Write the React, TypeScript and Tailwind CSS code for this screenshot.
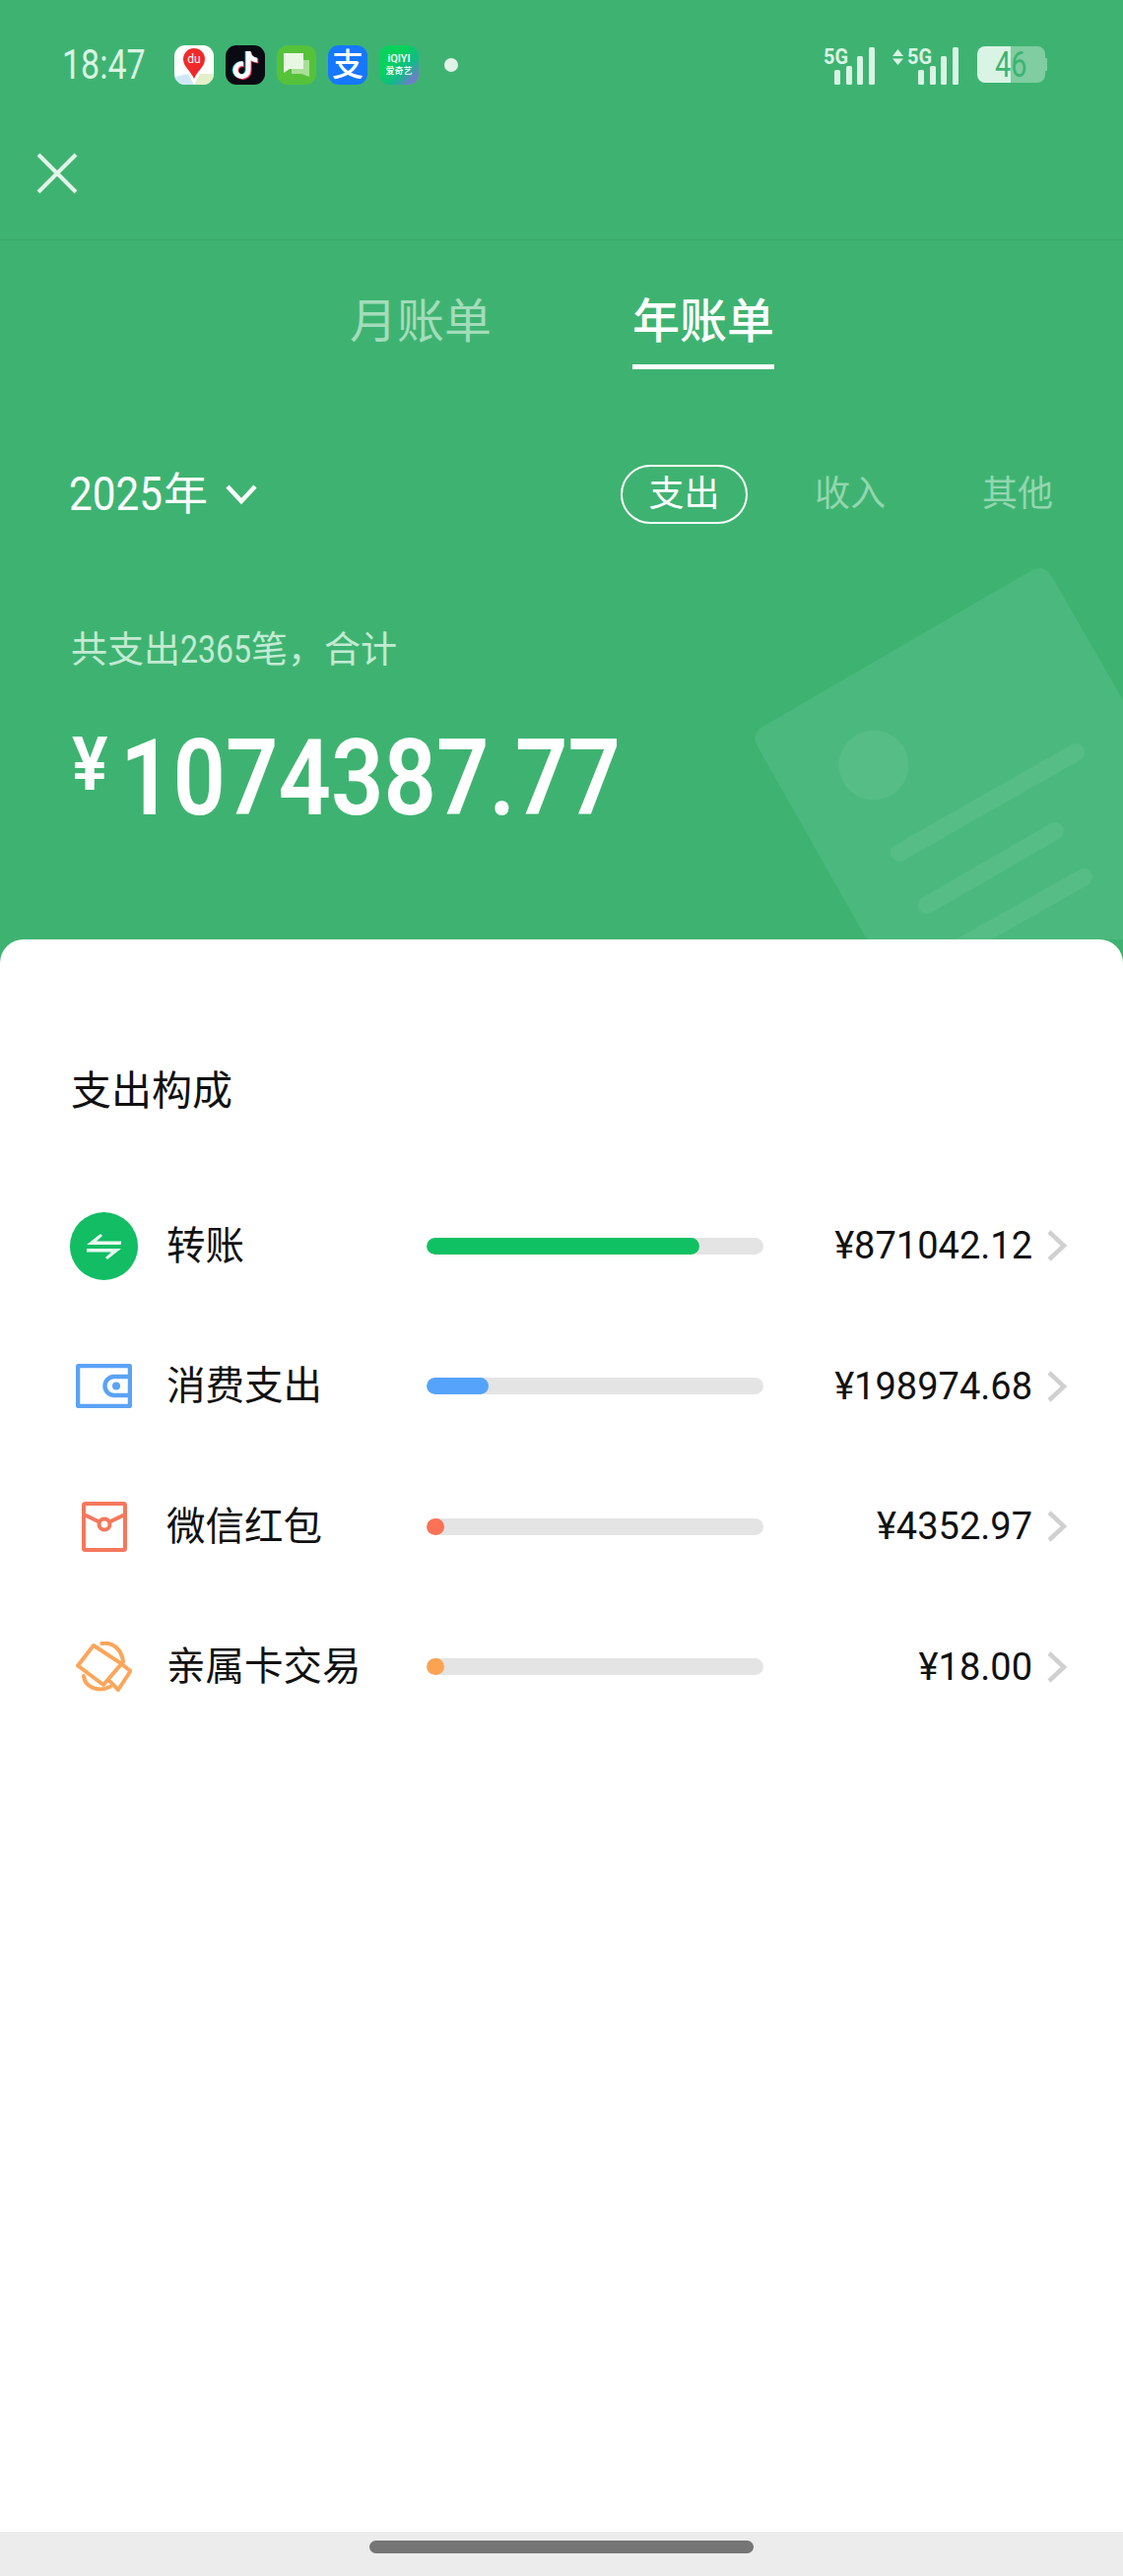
import { ReactNode } from 'react';
import { FaTiktok } from 'react-icons/fa';

const rows = [
    { name: '转账', amount: '¥871042.12', fill: 'w-[277px] bg-[#0fc163]', icon: <TransferIcon /> },
    { name: '消费支出', amount: '¥198974.68', fill: 'w-[63px] bg-[#55a3fb]', icon: <WalletIcon /> },
    { name: '微信红包', amount: '¥4352.97', fill: 'w-[18px] bg-[#fb7256]', icon: <PacketIcon /> },
    { name: '亲属卡交易', amount: '¥18.00', fill: 'w-[18px] bg-[#fca352]', icon: <FamilyCardIcon /> },
];

function TransferIcon() {
    return (
        <svg width="69" height="69" viewBox="0 0 69 69">
            <circle cx="34.5" cy="34.5" r="34.5" fill="#12bd64" />
            <path d="M17 33 L31 22 L33 24 L27 29.5 H52 V33 Z" fill="#eafaf1" />
            <path d="M52 37 L38 48 L36 46 L42 40.5 H17 V37 Z" fill="#eafaf1" />
        </svg>
    );
}

function WalletIcon() {
    return (
        <svg width="57" height="45" viewBox="0 0 57 45" fill="none" stroke="#5ba3f5" strokeWidth="4.5">
            <rect x="2" y="2" width="53" height="41" rx="1.5" />
            <path d="M55 13 H39 a9.5 9.5 0 0 0 0 19 H55" />
            <circle cx="41" cy="22.5" r="4" fill="#5ba3f5" stroke="none" />
        </svg>
    );
}

function PacketIcon() {
    return (
        <svg width="46" height="51" viewBox="0 0 46 51" fill="none" stroke="#f4785c" strokeWidth="4">
            <rect x="2" y="2" width="42" height="47" rx="1.5" />
            <path d="M2 13 L23 23 L44 13" />
            <circle cx="23" cy="23" r="5.5" fill="#fff" />
        </svg>
    );
}

function FamilyCardIcon() {
    return (
        <svg width="57" height="51" viewBox="0 0 57 51" fill="none" stroke="#fba65a" strokeWidth="4" strokeLinejoin="round" strokeLinecap="round">
            <path d="M2 24.5 L18 4 L46.3 22.7 L28 44 Z" />
            <path d="M46.3 22.7 L55.5 30 L43 49 L34.7 40.6" />
            <path d="M26.3 2 C37 0 47 8 48 21" />
            <path d="M8 35 C9 46 22 52 34.7 46" />
        </svg>
    );
}

function Signal({ arrows }: { arrows?: boolean }) {
    return (
        <svg width={arrows ? 68 : 53} height="42" viewBox={arrows ? '0 0 68 42' : '0 0 53 42'} className="block">
            {arrows && <path d="M0 11 L5.5 4 L11 11 Z M0 13.500 L5.500 20 L11 13.500 Z" fill="#d9f3e4" />}
            <g transform={arrows ? 'translate(15 0)' : 'translate(0 0)'} fill="#d9f3e4">
                <text x="0" y="19" fontFamily="Roboto, sans-serif" fontWeight="700" fontSize="22" textLength="25" lengthAdjust="spacingAndGlyphs">5G</text>
                <rect x="11" y="25" width="6" height="15" rx="1.500" />
                <rect x="23" y="21" width="6" height="19" rx="1.500" />
                <rect x="34" y="11" width="6" height="29" rx="1.500" />
                <rect x="46" y="2" width="6" height="38" rx="1.500" />
            </g>
        </svg>
    );
}

function AppTile({ className, children }: { className: string; children: ReactNode }) {
    return <div className={`relative w-[40px] h-[40px] rounded-[11px] overflow-hidden flex items-center justify-center ${className}`}>{children}</div>;
}

function StatusBar() {
    return (
        <div className="h-[108px] pt-[46px] flex items-start text-[#d9f3e4]">
            <div className="w-[177px] pl-[63px] h-[40px] flex items-center">
                <span className="inline-block origin-left scale-x-[0.81] text-[42px] leading-none whitespace-nowrap">18:47</span>
            </div>
            <div className="flex gap-[12px]">
                <AppTile className="bg-white">
                    <svg width="40" height="40" viewBox="0 0 40 40">
                        <path d="M0 32 L14 29 L20 40 H0 Z" fill="#cfe8f5" />
                        <path d="M40 29 L26 29 L20 40 H40 Z" fill="#e4efc9" />
                        <path d="M20 34 C17 26 9 22 9 14 a11 11 0 0 1 22 0 C31 22 23 26 20 34 Z" fill="#ef2a2a" />
                        <text x="20" y="18" textAnchor="middle" fontFamily="Roboto, sans-serif" fontSize="12" fill="#fff">du</text>
                    </svg>
                </AppTile>
                <AppTile className="bg-[#0a0a12]">
                    <FaTiktok className="absolute text-[#35e0e8] text-[28px] -translate-x-[1px]" />
                    <FaTiktok className="absolute text-[#f0345a] text-[28px] translate-x-[1px] translate-y-[1px]" />
                    <FaTiktok className="absolute text-white text-[28px]" />
                </AppTile>
                <AppTile className="bg-[#55c23a]">
                    <svg width="40" height="40" viewBox="0 0 40 40">
                        <path d="M15 15 H33 V32 L25 29 H15 Z" fill="#a8e098" />
                        <path d="M7 8 H27 V24 H13 L7 28 Z" fill="#e8f7e2" />
                    </svg>
                </AppTile>
                <AppTile className="bg-[#1677ff]">
                    <span className="text-white text-[32px] leading-none font-medium">支</span>
                </AppTile>
                <AppTile className="bg-[linear-gradient(135deg,#08d25c_35%,#12b98a_65%,#a45cf0)]">
                    <div className="flex flex-col items-center text-white leading-none">
                        <span className="text-[11px] leading-[12px] font-medium">iQIYI</span>
                        <span className="text-[9px] leading-[12px] font-medium">爱奇艺</span>
                    </div>
                </AppTile>
            </div>
            <div className="ml-[26px] mt-[13px] w-[14px] h-[14px] rounded-full bg-[#dff3e8]" />
            <div className="ml-auto mr-[77px] flex items-start">
                <div className="ml-0"><Signal /></div>
                <div className="ml-[17px]"><Signal arrows /></div>
                <div className="ml-[18px] relative flex h-[37px] w-[71px] mt-[1px]">
                    <div className="w-[34px] bg-[#d9f3e4] rounded-l-[8px]" />
                    <div className="w-[35px] bg-[#7fcda0] rounded-r-[8px]" />
                    <div className="w-[2px] h-[13px] mt-[12px] bg-[#7fcda0]" />
                    <span className="absolute inset-0 flex items-center justify-center text-[36px] leading-none text-[#3eb371] -translate-x-[1px]">
                        <span className="inline-block scale-x-[0.8]">46</span>
                    </span>
                </div>
            </div>
        </div>
    );
}

function Row({ row }: { row: (typeof rows)[number] }) {
    return (
        <div className="h-[142.5px] flex items-center">
            <div className="ml-[71px] w-[69px] flex justify-center">{row.icon}</div>
            <div className="ml-[29px] w-[264px] text-[39.5px] leading-none text-[#111]">{row.name}</div>
            <div className="w-[342px] h-[17px] rounded-full bg-[#e4e4e4] overflow-hidden">
                <div className={`h-full rounded-full ${row.fill}`} />
            </div>
            <div className="w-[273px] text-right text-[38px] leading-none text-[#111]">{row.amount}</div>
            <svg width="22" height="32" viewBox="0 0 22 32" fill="none" stroke="#d0d0d0" strokeWidth="4.5" className="ml-[14px]">
                <path d="M3 2 L18 16 L3 30" />
            </svg>
        </div>
    );
}

export default function App() {
    return (
        <div className="w-[1140px] h-[2616px] flex flex-col overflow-hidden bg-[#3eb371] font-['Roboto','Noto_Sans_CJK_SC',sans-serif]">
            <div className="relative h-[954px] shrink-0 overflow-hidden">
                {/* Decorative bill, behind the header */}
                <svg width="1140" height="954" viewBox="0 0 1140 954" className="absolute inset-0">
                    <path d="M776 737 L1046 580 Q1060 572 1068 586 L1200 815 L1200 954 L880 954 L769 758 Q762 745 776 737 Z" fill="#4bb97d" />
                    <circle cx="887" cy="777" r="35.500" fill="#55bd85" />
                    <g stroke="#55bd85" strokeWidth="18" strokeLinecap="round">
                        <path d="M913 866 L1092 764" />
                        <path d="M941 919 L1071 844" />
                        <path d="M960 970 L1100 891" />
                    </g>
                </svg>

                <div className="relative">
                    <StatusBar />
                    <div className="h-[136px] pt-[47px] pl-[37px] border-b border-[#39a96a]">
                        <svg width="42" height="42" viewBox="0 0 42 42" stroke="#e3f5ea" strokeWidth="4" className="block">
                            <path d="M2 2 L40 40 M40 2 L2 40" />
                        </svg>
                    </div>

                    <div className="flex pl-[355px] gap-[143px] pt-[53px] text-[48px] leading-[60px]">
                        <div className="text-[#a3dcbb]">月账单</div>
                        <div className="relative text-white font-medium">
                            年账单
                            <div className="absolute left-0 right-0 -bottom-[18px] h-[5px] bg-white" />
                        </div>
                    </div>

                    <div className="flex items-center pl-[70px] mt-[115px] h-[60px]">
                        <span className="text-[45px] leading-none text-white whitespace-nowrap">
                            <span className="inline-block w-[96px] origin-left scale-x-[0.88] text-[48px]">2025</span>年
                        </span>
                        <svg width="32" height="22" viewBox="0 0 32 22" fill="none" stroke="#fff" strokeWidth="4.500" className="ml-[18px]">
                            <path d="M2 3 L16 18 L30 3" />
                        </svg>
                        <div className="ml-[369px] w-[129px] h-[60px] rounded-full border-2 border-white flex items-center justify-center text-[36px] leading-none text-white">支出</div>
                        <div className="ml-[68px] text-[36px] leading-none text-[#93d6af]">收入</div>
                        <div className="ml-[98px] text-[36px] leading-none text-[#93d6af]">其他</div>
                    </div>

                    <div className="pl-[72px] mt-[106px] text-[37px] leading-[44px] text-[#c3ead3] whitespace-nowrap">
                        共支出<span className="inline-block w-[72px] origin-left scale-x-[0.82] text-[39px]">2365</span>笔，合计
                    </div>

                    <div className="flex items-start pl-[73px] mt-[53px] text-white">
                        <span className="text-[76px] leading-[70px] mt-[5px] font-semibold inline-block origin-left scale-x-[0.9]">¥</span>
                        <span className="inline-block origin-left scale-x-[0.875] ml-[8px] text-[107px] leading-[110px] font-semibold whitespace-nowrap">1074387.77</span>
                    </div>
                </div>
            </div>

            <div className="relative flex-1 flex flex-col bg-white rounded-t-[24px]">
                <div className="pl-[72px] pt-[124px] text-[41px] leading-[60px] text-[#111]">支出构成</div>
                <div className="mt-[56px]">
                    {rows.map((row) => (
                        <Row key={row.name} row={row} />
                    ))}
                </div>
                <div className="mt-auto h-[45px] bg-[#ececec] flex justify-center pt-[9px]">
                    <div className="w-[390px] h-[13px] rounded-full bg-[#757575]" />
                </div>
            </div>
        </div>
    );
}
